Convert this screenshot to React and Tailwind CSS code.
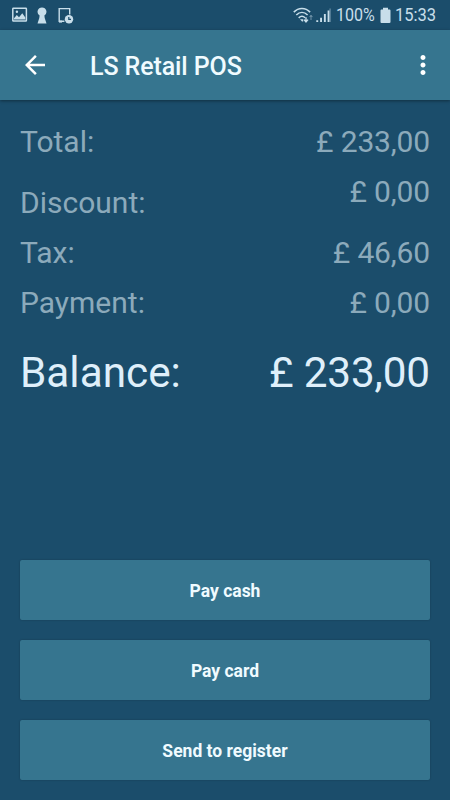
import { MdArrowBack, MdMoreVert } from "react-icons/md";

const totals = [
  { label: "Total:", value: "£ 233,00", row: "h-[50px] items-start" },
  { label: "Discount:", value: "£ 0,00", row: "h-[61px] items-start", labelClass: "pt-[11px]" },
  { label: "Tax:", value: "£ 46,60", row: "h-[50px] items-start" },
  { label: "Payment:", value: "£ 0,00", row: "h-[50px] items-start" },
];

const actions = ["Pay cash", "Pay card", "Send to register"];

function StatusBar() {
  return (
    <div className="h-[30px] flex items-center justify-between px-3 text-[#c8deea]">
      {/* Notifications */}
      <div className="flex items-center">
        <svg width="16" height="16" viewBox="0 0 16 16" fill="none">
          <rect x="0.8" y="1.2" width="13.6" height="12.8" rx="0.6" stroke="currentColor" strokeWidth="1.5" />
          <circle cx="4.9" cy="4.8" r="1.2" fill="currentColor" />
          <path d="M2 12.6v-1.4l2.8-3.2 2.2 2.2 3.3-4 3 4.4v2z" fill="currentColor" />
        </svg>
        <svg className="ml-[9px]" width="10" height="17" viewBox="0 0 10 17" fill="currentColor">
          <path d="M5 .4a4.4 4.4 0 0 0-2.4 8.1L2.3 11 .5 16.6h9L7.7 11l-.3-2.5A4.4 4.4 0 0 0 5 .4z" />
        </svg>
        <svg className="ml-[11px]" width="16" height="17" viewBox="0 0 16 17" fill="none">
          <path d="M6.4 14.2H1.2V1.6h10.5v6" stroke="currentColor" strokeWidth="1.4" />
          <path d="M1 14.6h3" stroke="currentColor" strokeWidth="2" />
          <circle cx="11" cy="12.2" r="4.2" fill="currentColor" />
          <path d="M10.8 9.9v2.5h2.2" stroke="#1b4d6b" strokeWidth="1.2" />
        </svg>
      </div>

      {/* Signal, battery and clock */}
      <div className="flex items-center">
        <svg width="21" height="17" viewBox="0 0 21 17" fill="none" stroke="currentColor" strokeWidth="1.6">
          <path d="M.8 5.1c4.7-4.8 11.6-4.8 16.3 0" />
          <path d="M3.3 8c3.4-3.3 7.9-3.3 11.3 0" />
          <path d="M5.7 10.8c2-1.9 4.5-1.9 6.4 0" />
          <path d="M7 12.2h3.2v2.2H9z" fill="currentColor" stroke="none" />
          <path d="M13 10.2v4.6M11 12.6l2 2.3 2-2.3" strokeWidth="1.4" />
          <path d="M18 13V8.4M16.5 10.1 18 8.4l1.5 1.7" strokeWidth="1" opacity="0.5" />
        </svg>
        <svg className="ml-[2px]" width="16" height="17" viewBox="0 0 16 17" fill="currentColor">
          <path d="M.3 13.2h1.9V15H.3zM4.1 10.8H6V15H4.1zM7.9 7H9.8v8H7.9zM11.6 3.4h1.8V15h-1.8z" />
          <path d="M13.4 1.4h1.4V15h-1.4z" opacity="0.4" />
        </svg>
        <span className="ml-[4px] w-[40px] text-[19px] leading-[30px] whitespace-nowrap origin-left scale-x-[0.845]">100%</span>
        <svg className="ml-[4px]" width="11" height="17" viewBox="0 0 11 17" fill="currentColor">
          <path d="M3 .8h5v1.8h1.6c.5 0 .9.4.9.9V15c0 .5-.4.9-.9.9H1.4c-.5 0-.9-.4-.9-.9V3.5c0-.5.4-.9.9-.9H3z" />
        </svg>
        <span className="ml-[4px] w-[43px] text-[19px] leading-[30px] whitespace-nowrap origin-left scale-x-[0.87]">15:33</span>
      </div>
    </div>
  );
}

export default function App() {
  return (
    <div className="w-[450px] h-[800px] flex flex-col overflow-hidden bg-[#1b4d6b] font-['Roboto',sans-serif]">
      <StatusBar />

      {/* Header */}
      <header className="h-[70px] flex items-center bg-[#36758f] pl-5 pr-3 text-white shadow-[0_1px_3px_rgba(0,0,0,0.4)]">
        <button aria-label="Back">
          <MdArrowBack size={30} />
        </button>
        <h1 className="ml-10 pt-[3px] text-[25px] leading-[30px] tracking-[-0.1px] font-medium text-[#f0fbff]">LS Retail POS</h1>
        <button className="ml-auto" aria-label="More">
          <MdMoreVert size={30} />
        </button>
      </header>

      {/* Totals */}
      <div className="px-5 pt-[22px] text-[30px] leading-[40px] text-[#8caabb]">
        {totals.map(({ label, value, row, labelClass }) => (
          <div key={label} className={`flex justify-between ${row}`}>
            <span className={labelClass}>{label}</span>
            <span className="tracking-[-0.15px]">{value}</span>
          </div>
        ))}
        <div className="flex justify-between pt-[12px] text-[42.3px] leading-[56px] text-[#dfeffa]">
          <span>Balance:</span>
          <span className="tracking-[-0.15px]">£ 233,00</span>
        </div>
      </div>

      {/* Payment actions */}
      <div className="mt-auto px-5 pb-5 flex flex-col gap-5">
        {actions.map(action => (
          <button key={action}
            className="h-[60px] pt-[2px] rounded-xs bg-[#36758f] text-[17.5px] font-bold text-[#f0fbff] shadow-[0_0_2px_rgba(0,0,0,0.25)]">
            {action}
          </button>
        ))}
      </div>
    </div>
  );
}
